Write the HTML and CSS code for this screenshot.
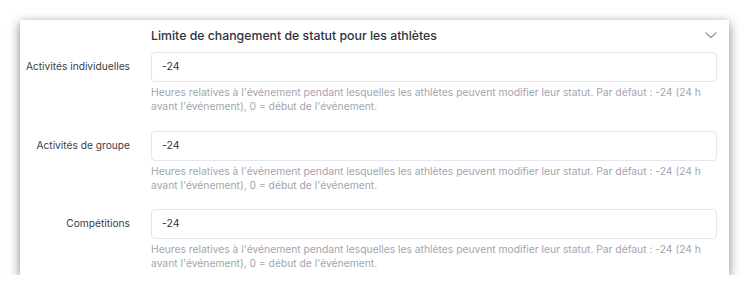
FILE: index.html
```html
<!DOCTYPE html>
<html lang="fr">
<head>
<meta charset="utf-8">
<link rel="stylesheet" href="styles.css">
</head>
<body>
<div class="card">
  <div class="header">
    <div class="title">Limite de changement de statut pour les athlètes</div>
    <svg class="chev" width="12" height="7" viewBox="0 0 12 7"><path d="M1 1l5 4.5L11 1" fill="none" stroke="#9ea3b2" stroke-width="1.6" stroke-linecap="round" stroke-linejoin="round"/></svg>
  </div>
  <div class="row">
    <div class="label">Activités individuelles</div>
    <div class="field">
      <div class="input">-24</div>
      <div class="help">Heures relatives à l'événement pendant lesquelles les athlètes peuvent modifier leur statut. Par défaut : -24 (24 h avant l'événement), 0 = début de l'événement.</div>
    </div>
  </div>
  <div class="row">
    <div class="label">Activités de groupe</div>
    <div class="field">
      <div class="input">-24</div>
      <div class="help">Heures relatives à l'événement pendant lesquelles les athlètes peuvent modifier leur statut. Par défaut : -24 (24 h avant l'événement), 0 = début de l'événement.</div>
    </div>
  </div>
  <div class="row">
    <div class="label">Compétitions</div>
    <div class="field">
      <div class="input">-24</div>
      <div class="help">Heures relatives à l'événement pendant lesquelles les athlètes peuvent modifier leur statut. Par défaut : -24 (24 h avant l'événement), 0 = début de l'événement.</div>
    </div>
  </div>
</div>
</body>
</html>
```
FILE: styles.css
```css
html, body { margin: 0; padding: 0; background: #fff; }
body { padding: 20px 20px 0 20px; font-family: Inter, "Noto Sans", sans-serif; }
.card {
  width: 709px;
  height: 255px;
  background: #fff;
  box-shadow: 0 3px 10px rgba(0,0,0,0.5);
  box-sizing: border-box;
  overflow: hidden;
}
.header {
  display: flex;
  align-items: center;
  justify-content: space-between;
  height: 26px;
  padding: 2px 12px 0 131px;
}
.title { font-size: 12.3px; font-weight: 500; color: #2f3340; }
.chev { display: block; }
.row {
  display: grid;
  grid-template-columns: 110px 566px;
  column-gap: 21px;
  height: 78.5px;
  padding-top: 4px;
  box-sizing: border-box;
}
.label {
  text-align: right;
  font-size: 10.2px;
  color: #3a3d48;
  line-height: 29px;
}
.input {
  height: 30px;
  box-sizing: border-box;
  border: 1px solid #e4e5ee;
  border-radius: 4px;
  padding: 0 10px;
  font-size: 10.5px;
  line-height: 28px;
  color: #2f3340;
}
.help {
  margin-top: 3px;
  font-size: 10.3px;
  line-height: 14px;
  color: #a3a5ae;
}
```
